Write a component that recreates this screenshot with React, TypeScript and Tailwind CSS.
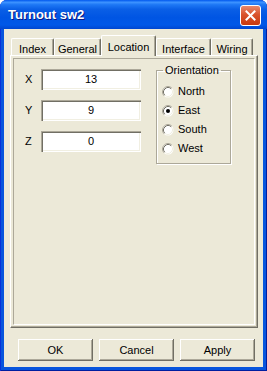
import React from "react";

const tabs = [
  { label: "Index", w: "w-[43px]" },
  { label: "General", w: "w-[47px]" },
  { label: "Location", w: "w-[55px]", active: true },
  { label: "Interface", w: "w-[55px]" },
  { label: "Wiring", w: "w-[42px]" },
];

const coords = [
  { axis: "X", value: "13" },
  { axis: "Y", value: "9" },
  { axis: "Z", value: "0" },
];

const directions = ["North", "East", "South", "West"];

function Radio({ checked }: { checked?: boolean }) {
  return (
    <svg width="12" height="12" viewBox="0 0 12 12" className="shrink-0">
      <circle cx="6" cy="6" r="5.5" fill="#fff" />
      <path d="M2.11 9.89 A5.5 5.5 0 0 1 9.89 2.11" fill="none" stroke="#ACA899" strokeWidth="1" />
      <path d="M2.82 9.18 A4.5 4.5 0 0 1 9.18 2.82" fill="none" stroke="#716F64" strokeWidth="1" />
      <path d="M9.18 2.82 A4.5 4.5 0 0 1 2.82 9.18" fill="none" stroke="#F1EFE2" strokeWidth="1" />
      {checked && <circle cx="6" cy="6" r="2" fill="#000" />}
    </svg>
  );
}

function Button({ label }: { label: string }) {
  return (
    <div className="flex h-[22px] w-[75px] items-center justify-center bg-[#ECE9D8] text-black shadow-[inset_-1px_-1px_0_#716F64,inset_1px_1px_0_#fff,inset_-2px_-2px_0_#ACA899]">
      {label}
    </div>
  );
}

export default function App() {
  return (
    <div className="h-[371px] w-[267px] bg-white font-['Liberation_Sans',Arial,sans-serif] text-[11px]">
      <div className="flex h-full flex-col rounded-t-[7px] bg-[#0855DD] shadow-[inset_1px_0_0_#0831D9,inset_-1px_0_0_#001EA0,inset_0_-1px_0_#001EA0]">
        {/* title bar */}
        <div className="flex h-[29px] shrink-0 items-center justify-between rounded-t-[7px] bg-[linear-gradient(180deg,#0058EE_0%,#3D93FF_8%,#1E78F5_16%,#0A5FE6_32%,#0055E3_60%,#0058E8_86%,#0046D0_100%)] pl-[8px] pr-[6px]">
          <span className="text-[13px] font-bold text-white [text-shadow:1px_1px_0_#0A1883]">Turnout sw2</span>
          <div className="mt-[1px] flex h-[21px] w-[21px] items-center justify-center rounded-[3px] border border-white bg-[linear-gradient(180deg,#E9896C_0%,#D9532C_45%,#C8390F_100%)]">
            <svg width="11" height="11" viewBox="0 0 11 11">
              <path d="M1.5 1.5 L9.5 9.5 M9.5 1.5 L1.5 9.5" stroke="#fff" strokeWidth="2" strokeLinecap="square" />
            </svg>
          </div>
        </div>

        {/* client area */}
        <div className="mx-[4px] mb-[4px] flex flex-1 flex-col bg-[#ECE9D8] text-black">
          <div className="relative z-10 flex items-end pl-[7px] pt-[6px]">
            {tabs.map((t) =>
              t.active ? (
                <div
                  key={t.label}
                  className={`${t.w} -mb-px flex h-[21px] justify-center rounded-t-[2px] border-l border-t border-r border-l-white border-t-white border-r-[#716F64] bg-[#ECE9D8] pt-[3px] shadow-[inset_-1px_0_0_#ACA899]`}
                >
                  {t.label}
                </div>
              ) : (
                <div
                  key={t.label}
                  className={`${t.w} flex h-[17px] justify-center rounded-t-[2px] border-l border-t border-r border-l-white border-t-white border-r-[#716F64] pt-[2px] shadow-[inset_-1px_0_0_#ACA899]`}
                >
                  {t.label}
                </div>
              )
            )}
          </div>

          {/* tab page */}
          <div className="ml-[6px] mr-[5px] flex h-[273px] flex-col border-b border-l border-r border-t border-b-[#716F64] border-l-white border-r-[#716F64] border-t-white p-[2px] shadow-[inset_-1px_-1px_0_#ACA899]">
            <div className="flex flex-1 border-l border-t border-b border-r border-l-[#ACA899] border-t-[#ACA899] border-b-white border-r-white pl-[11px] pt-[5px]">
              <div className="mt-[5px] flex flex-col gap-[10px]">
                {coords.map((c) => (
                  <div key={c.axis} className="flex h-[21px] items-center">
                    <span className="w-[16px]">{c.axis}</span>
                    <div className="flex h-[21px] w-[100px] items-center justify-center bg-white shadow-[inset_1px_1px_0_#ACA899,inset_2px_2px_0_#716F64,inset_-1px_-1px_0_#fff,inset_-2px_-2px_0_#F1EFE2]">
                      {c.value}
                    </div>
                  </div>
                ))}
              </div>

              <fieldset className="ml-[15px] h-[100px] w-[75px] border border-[#ACA899] pb-[5px] pl-[5px] shadow-[1px_1px_0_#fff,inset_1px_1px_0_#fff]">
                <legend className="ml-[1px] px-[2px] leading-[13px]">Orientation</legend>
                <div className="flex flex-col pt-[5px]">
                  {directions.map((d) => (
                    <div key={d} className="flex h-[19px] items-center gap-[4px]">
                      <Radio checked={d === "East"} />
                      <span>{d}</span>
                    </div>
                  ))}
                </div>
              </fieldset>
            </div>
          </div>

          <div className="mt-[11px] flex justify-end gap-[6px] pr-[8px]">
            <Button label="OK" />
            <Button label="Cancel" />
            <Button label="Apply" />
          </div>
        </div>
      </div>
    </div>
  );
}
